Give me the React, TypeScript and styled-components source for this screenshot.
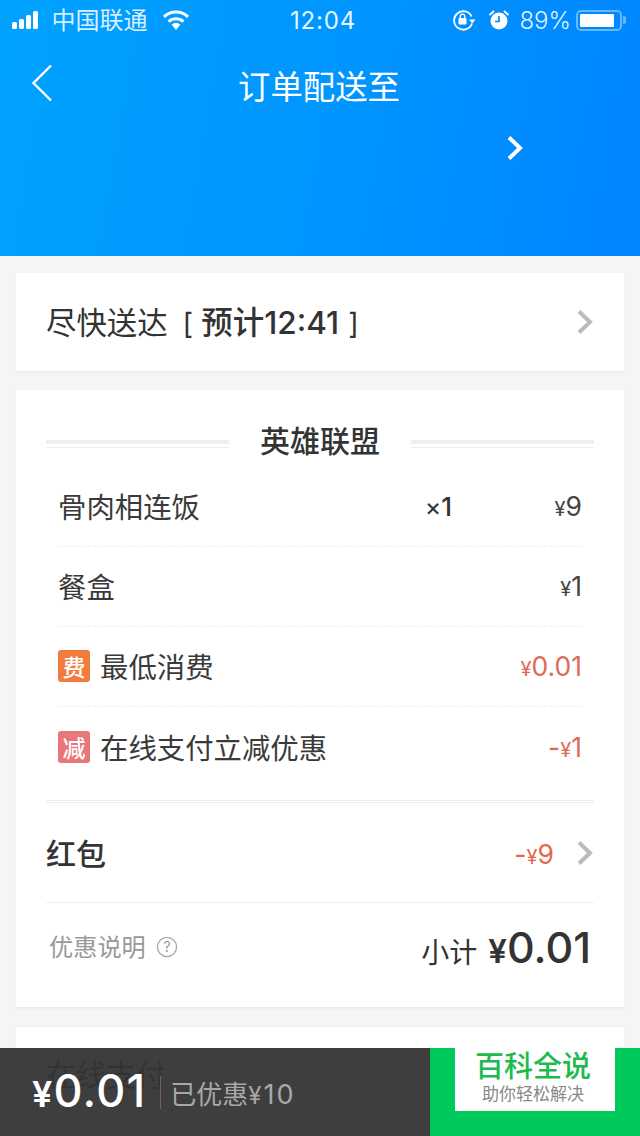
import styled, { createGlobalStyle } from "styled-components";

const GlobalStyle = createGlobalStyle`
    html, body {
        margin: 0;
        padding: 0;
        background: #f5f5f5;
    }

    body {
        font-family: Inter, "Noto Sans CJK SC", sans-serif;
        color: #333;
    }
`;

function Chevron({ color = "#bbb", width = 4 }: { color?: string; width?: number }) {
    return <svg width="18" height="26" viewBox="0 0 18 26">
        <polyline points="3,2.5 14,13 3,23.5" fill="none" stroke={color} strokeWidth={width} />
    </svg>;
}

export default function App() {
    return <Page>
        <GlobalStyle />
        <Header>
            <StatusBar>
                <StatusLeft>
                    <Signal>
                        <SignalBar $h={7} />
                        <SignalBar $h={10} />
                        <SignalBar $h={14} />
                        <SignalBar $h={18} />
                    </Signal>
                    <Carrier>中国联通</Carrier>
                    <svg width="28" height="20" viewBox="0 0 28 20">
                        <path d="M14 20 L9.6 14.6 A7 7 0 0 1 18.4 14.6 Z" fill="#fff" />
                        <path d="M6.6 11.6 A11 11 0 0 1 21.4 11.6" fill="none" stroke="#fff" strokeWidth="3" />
                        <path d="M2 6.8 A17.5 17.5 0 0 1 26 6.8" fill="none" stroke="#fff" strokeWidth="3" />
                    </svg>
                </StatusLeft>
                <Clock>12:04</Clock>
                <StatusRight>
                    <svg width="24" height="22" viewBox="0 0 24 22">
                        <path d="M20 14.5 A9.2 9.2 0 1 1 19.6 7.5" fill="none" stroke="#fff" strokeWidth="1.8" />
                        <path d="M17 10.5 h6.5 l-3.2 4 Z" fill="#fff" />
                        <rect x="6.5" y="9" width="8" height="6.5" rx="1" fill="#fff" />
                        <path d="M8.2 9 V7.4 a2.3 2.3 0 0 1 4.6 0 V9" fill="none" stroke="#fff" strokeWidth="1.3" />
                    </svg>
                    <AlarmIcon width="22" height="22" viewBox="0 0 22 22">
                        <circle cx="11" cy="12" r="8.5" fill="#fff" />
                        <path d="M11 7 V12.5 H7" fill="none" stroke="#0a8cff" strokeWidth="1.7" />
                        <path d="M1.5 6 L6 2 M20.5 6 L16 2" stroke="#fff" strokeWidth="2" />
                    </AlarmIcon>
                    <BatteryText>89%</BatteryText>
                    <Battery>
                        <BatteryFill style={{ width: "89%" }} />
                    </Battery>
                    <BatteryTip />
                </StatusRight>
            </StatusBar>
            <NavBar>
                <BackButton>
                    <svg width="22" height="38" viewBox="0 0 22 38">
                        <polyline points="20,1.5 2.5,19 20,36.5" fill="none" stroke="#fff" strokeWidth="2.4" />
                    </svg>
                </BackButton>
                <Title>订单配送至</Title>
            </NavBar>
            <AddressRow>
                <Chevron color="#fff" />
            </AddressRow>
        </Header>

        <Card>
            <DeliveryRow>
                <DeliveryText>尽快送达<Estimate>[<strong>预计12:41</strong>]</Estimate></DeliveryText>
                <Chevron />
            </DeliveryRow>
        </Card>

        <OrderCard>
            <ShopTitle>
                <DoubleLine />
                <ShopName>英雄联盟</ShopName>
                <DoubleLine />
            </ShopTitle>
            <Items>
                <ItemRow>
                    <ItemName>骨肉相连饭</ItemName>
                    <Qty><small>×</small>1</Qty>
                    <Price><small>¥</small>9</Price>
                </ItemRow>
                <ItemRow>
                    <ItemName>餐盒</ItemName>
                    <Price><small>¥</small>1</Price>
                </ItemRow>
                <ItemRow>
                    <Badge $color="#f47b3e">费</Badge>
                    <ItemName>最低消费</ItemName>
                    <Price $red><small>¥</small>0.01</Price>
                </ItemRow>
                <ItemRow>
                    <Badge $color="#e8767a">减</Badge>
                    <ItemName>在线支付立减优惠</ItemName>
                    <Price $red>-<small>¥</small>1</Price>
                </ItemRow>
            </Items>
            <FlippedLine />
            <RedPacketRow>
                <RedPacketLabel>红包</RedPacketLabel>
                <RedPacketValue>-<small>¥</small>9</RedPacketValue>
                <Chevron />
            </RedPacketRow>
            <SummaryRow>
                <Note>
                    <NoteText>优惠说明</NoteText>
                    <svg width="22" height="22" viewBox="0 0 22 22">
                        <circle cx="11" cy="11" r="9.6" fill="none" stroke="#aaa" strokeWidth="1.3" />
                        <text x="11" y="16" textAnchor="middle" fontSize="14" fill="#999">?</text>
                    </svg>
                </Note>
                <Subtotal>小计<SubtotalValue><small>¥</small>0.01</SubtotalValue></Subtotal>
            </SummaryRow>
        </OrderCard>

        <PaymentCard>
            <PaymentLabel>在线支付</PaymentLabel>
        </PaymentCard>

        <BottomBar>
            <BottomInfo>
                <Total><small>¥</small>0.01</Total>
                <Discount>已优惠<DiscountAmount><small>¥</small>10</DiscountAmount></Discount>
            </BottomInfo>
            <PayButton />
        </BottomBar>
        <Watermark>
            <WatermarkTitle>百科全说</WatermarkTitle>
            <WatermarkSub>助你轻松解决</WatermarkSub>
        </Watermark>
    </Page>;
}

const Page = styled.div`
    position: relative;
    width: 640px;
    height: 1136px;
    overflow: hidden;
    background: #f5f5f5;
`;

const Header = styled.header`
    height: 256px;
    background: linear-gradient(100deg, #00a2ff 0%, #0096ff 50%, #0085ff 100%);
    color: #fff;
`;

const StatusBar = styled.div`
    display: grid;
    grid-template-columns: 1fr auto 1fr;
    align-items: center;
    height: 40px;
    padding: 0 14px 0 12px;
`;

const StatusLeft = styled.div`
    display: flex;
    align-items: center;
`;

const Signal = styled.div`
    display: flex;
    align-items: flex-end;
    gap: 2.4px;
    height: 18px;
`;

const SignalBar = styled.span<{ $h: number }>`
    width: 4.6px;
    height: ${p => p.$h}px;
    border-radius: 1.5px;
    background: #fff;
`;

const Carrier = styled.span`
    margin: 0 14px 0 14px;
    padding-bottom: 3px;
    font-size: 24px;
    color: rgba(255, 255, 255, 0.85);
`;

const Clock = styled.span`
    margin-left: 8px;
    font-size: 24px;
    letter-spacing: 0.8px;
    color: rgba(255, 255, 255, 0.92);
`;

const StatusRight = styled.div`
    display: flex;
    align-items: center;
    justify-content: flex-end;
`;

const AlarmIcon = styled.svg`
    margin-left: 12px;
`;

const BatteryText = styled.span`
    margin: 0 5px 0 9px;
    font-size: 24px;
    font-weight: 300;
    color: rgba(255, 255, 255, 0.9);
`;

const Battery = styled.div`
    box-sizing: border-box;
    width: 46px;
    height: 21px;
    padding: 2px;
    border: 2px solid rgba(255, 255, 255, 0.4);
    border-radius: 5px;
`;

const BatteryFill = styled.div`
    height: 100%;
    background: #fff;
    border-radius: 1px;
`;

const BatteryTip = styled.div`
    width: 3px;
    height: 8px;
    margin-left: 1px;
    background: rgba(255, 255, 255, 0.4);
    border-radius: 0 2px 2px 0;
`;

const NavBar = styled.div`
    position: relative;
    display: flex;
    align-items: center;
    justify-content: center;
    height: 88px;
`;

const BackButton = styled.div`
    position: absolute;
    left: 31px;
    top: 24px;
    line-height: 0;
`;

const Title = styled.h1`
    margin: 0 2px 0 0;
    font-size: 32.4px;
    font-weight: 400;
`;

const AddressRow = styled.div`
    display: flex;
    justify-content: flex-end;
    padding-right: 116px;
    margin-top: 7px;
    line-height: 0;
`;

const Card = styled.section`
    margin: 17px 16px 0;
    background: #fff;
    box-shadow: 0 2px 2px rgba(0, 0, 0, 0.04);
`;

const DeliveryRow = styled.div`
    display: flex;
    align-items: center;
    justify-content: space-between;
    height: 98px;
    padding: 0 30px;
`;

const DeliveryText = styled.span`
    padding-bottom: 4px;
    font-size: 30.4px;
    color: #333;
`;

const Estimate = styled.span`
    margin-left: 15px;
    font-size: 29px;

    strong {
        margin: 0 9px 0 8px;
        font-size: 31.5px;
        font-weight: 500;
    }
`;

const OrderCard = styled(Card)`
    margin-top: 19px;
    height: 617px;
    box-sizing: border-box;
    padding: 26px 30px 0;
`;

const ShopTitle = styled.div`
    display: flex;
    align-items: center;
    justify-content: space-between;
    height: 50px;
`;

const DoubleLine = styled.div`
    width: 183px;
    height: 4px;
    margin-top: 6px;
    padding-bottom: 3px;
    background: #f0f0f0;
    background-clip: content-box;
    border-bottom: 1px solid #eee;
`;

const ShopName = styled.span`
    padding-bottom: 4px;
    font-size: 30px;
    font-weight: 500;
    color: #333;
`;

const Items = styled.div`
    margin-top: 1px;
    padding: 0 12px;
`;

const ItemRow = styled.div`
    display: flex;
    align-items: center;
    height: 80px;
    box-sizing: border-box;
    padding-bottom: 1px;
    border-bottom: 1px dashed #efefef;

    &:last-child {
        border-bottom: 0;
    }
`;

const ItemName = styled.span`
    flex: 1;
    padding-bottom: 1px;
    font-size: 28.4px;
    color: #3a3a3a;
`;

const Qty = styled.span`
    font-size: 26px;
    font-weight: 500;
    color: #333;

    small {
        font-size: 25px;
        font-weight: 400;
    }
`;

const Price = styled.span<{ $red?: boolean }>`
    min-width: 130px;
    text-align: right;
    font-size: 26.5px;
    color: ${p => (p.$red ? "#dc6b5a" : "#444")};

    small {
        font-size: 20px;
    }
`;

const Badge = styled.span<{ $color: string }>`
    display: flex;
    align-items: center;
    justify-content: center;
    width: 32px;
    height: 32px;
    margin-right: 10px;
    border-radius: 3px;
    background: ${p => p.$color};
    color: #fff;
    font-size: 23px;
    font-weight: 500;
`;

const FlippedLine = styled.div`
    margin-top: 13px;
    height: 1px;
    padding-top: 1px;
    background: #eee;
    background-clip: content-box;
    border-top: 1px solid #eee;
`;

const RedPacketRow = styled.div`
    display: flex;
    align-items: center;
    height: 100px;
    box-sizing: border-box;
    border-bottom: 1px solid #efefef;
`;

const RedPacketLabel = styled.span`
    flex: 1;
    padding-bottom: 2px;
    font-size: 30px;
    font-weight: 500;
    color: #333;
`;

const RedPacketValue = styled.span`
    margin: 2px 22px 0 0;
    font-size: 26.5px;
    color: #e2674e;

    small {
        font-size: 20px;
    }
`;

const SummaryRow = styled.div`
    display: flex;
    align-items: center;
    justify-content: space-between;
    height: 88px;
    padding: 0 3px 0 3px;
`;

const Note = styled.div`
    display: flex;
    align-items: center;
    gap: 10px;
    color: #999;
`;

const NoteText = styled.span`
    padding-bottom: 4px;
    font-size: 24.2px;
`;

const Subtotal = styled.div`
    display: flex;
    align-items: baseline;
    font-size: 28px;
    color: #333;
`;

const SubtotalValue = styled.span`
    margin-left: 11px;
    font-size: 43px;
    font-weight: 500;
    color: #333;

    small {
        font-size: 33px;
        font-weight: 600;
    }
`;

const PaymentCard = styled(Card)`
    margin-top: 19px;
    height: 109px;
    padding: 24px 30px 0;
    border-top: 1px solid #f0f0f0;
`;

const PaymentLabel = styled.span`
    font-size: 30px;
    color: #333;
`;

const BottomBar = styled.footer`
    position: absolute;
    left: 0;
    right: 0;
    bottom: 0;
    display: flex;
    height: 88px;
`;

const BottomInfo = styled.div`
    flex: 1;
    display: flex;
    align-items: center;
    padding-left: 32px;
    background: rgba(52, 52, 52, 0.95);
`;

const Total = styled.span`
    padding-right: 14px;
    font-size: 45px;
    font-weight: 500;
    letter-spacing: 1.2px;
    color: #fff;
    line-height: 30px;
    border-right: 1px solid #666;

    small {
        font-size: 36px;
        font-weight: 600;
    }
`;

const Discount = styled.span`
    margin-left: 9px;
    font-size: 26px;
    color: #a8a8a8;
`;

const DiscountAmount = styled.span`
    font-size: 27px;
    letter-spacing: 2px;

    small {
        font-size: 24px;
    }
`;

const PayButton = styled.div`
    width: 210px;
    background: #00c95c;
`;

const Watermark = styled.div`
    position: absolute;
    left: 455px;
    top: 1048px;
    display: flex;
    flex-direction: column;
    align-items: center;
    box-sizing: border-box;
    width: 160px;
    height: 63px;
    padding: 1px 4px 0 0;
    background: #fff;
`;

const WatermarkTitle = styled.span`
    font-size: 29px;
    font-weight: 500;
    line-height: 35px;
    color: #1dbb4f;
`;

const WatermarkSub = styled.span`
    font-size: 17px;
    line-height: 20px;
    color: #888;
`;
